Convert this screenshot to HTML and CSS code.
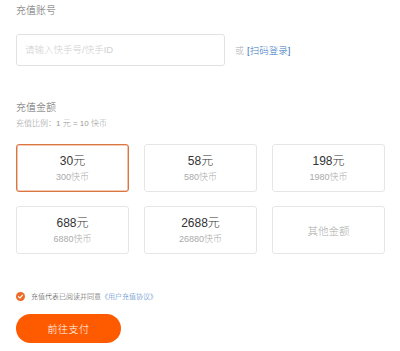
FILE: index.html
```html
<!DOCTYPE html>
<html lang="zh-CN">
<head>
<meta charset="utf-8">
<title>充值</title>
<link rel="stylesheet" href="styles.css">
</head>
<body>
<div class="page">
  <div class="label">充值账号</div>
  <div class="account-row">
    <div class="input">请输入快手号/快手ID</div>
    <span class="or">或</span>
    <a class="scan">[扫码登录]</a>
  </div>
  <div class="label label-amount">充值金额</div>
  <div class="ratio">充值比例：1 元 = 10 快币</div>
  <div class="grid">
    <div class="card selected"><div class="yuan">30元</div><div class="coin">300快币</div></div>
    <div class="card"><div class="yuan">58元</div><div class="coin">580快币</div></div>
    <div class="card"><div class="yuan">198元</div><div class="coin">1980快币</div></div>
    <div class="card"><div class="yuan">688元</div><div class="coin">6880快币</div></div>
    <div class="card"><div class="yuan">2688元</div><div class="coin">26880快币</div></div>
    <div class="card"><div class="other">其他金额</div></div>
  </div>
  <div class="agree">
    <svg class="check" width="9" height="9" viewBox="0 0 9 9"><circle cx="4.5" cy="4.5" r="4.5" fill="#ee6a26"/><path d="M2.4 4.6 L3.9 6 L6.6 3.2" fill="none" stroke="#fff" stroke-width="1.1" stroke-linecap="round" stroke-linejoin="round"/></svg>
    <span class="agree-text">充值代表已阅读并同意</span><a class="agree-link">《用户充值协议》</a>
  </div>
  <div class="btn">前往支付</div>
</div>
</body>
</html>
```
FILE: styles.css
```css
html, body {
  margin: 0;
  padding: 0;
  background: #fff;
}
body {
  font-family: "Liberation Sans", "Noto Sans CJK SC", sans-serif;
  font-weight: 300;
  color: #333;
}
.page {
  padding: 5px 0 0 16px;
}
.label {
  font-size: 10px;
  line-height: 12px;
  color: #666;
}
.account-row {
  margin-top: 17px;
  display: flex;
  align-items: center;
}
.input {
  box-sizing: border-box;
  width: 209px;
  height: 32px;
  border: 1px solid #e2e2e2;
  border-radius: 3px;
  padding-left: 8px;
  font-size: 9.5px;
  line-height: 30px;
  color: #d0d0d0;
}
.or {
  margin-left: 10px;
  font-size: 9px;
  color: #b0b0b0;
}
.scan {
  margin-left: 3px;
  font-size: 9.5px;
  color: #3b78c2;
}
.label-amount {
  margin-top: 36px;
}
.ratio {
  margin-top: 5px;
  font-size: 8px;
  line-height: 10px;
  color: #999;
}
.grid {
  margin-top: 15px;
  display: grid;
  grid-template-columns: repeat(3, 113px);
  grid-auto-rows: 48px;
  column-gap: 15px;
  row-gap: 14px;
}
.card {
  box-sizing: border-box;
  border: 1px solid #e6e6e6;
  border-radius: 3px;
  display: flex;
  flex-direction: column;
  align-items: center;
  justify-content: center;
  gap: 3px;
}
.card.selected {
  border-color: #dd7540;
  box-shadow: inset 0 0 0 0.6px #e59a70;
}
.yuan {
  font-size: 12px;
  line-height: 14px;
  color: #333;
}
.coin {
  font-size: 9px;
  line-height: 12px;
  color: #aaa;
}
.other {
  font-size: 10.5px;
  color: #aaa;
}
.agree {
  margin-top: 37px;
  display: flex;
  align-items: center;
  height: 10px;
  font-size: 7px;
}
.check {
  margin-right: 6px;
  flex: none;
}
.agree-text {
  color: #444;
}
.agree-link {
  color: #3b78c2;
}
.btn {
  margin-top: 13px;
  width: 105px;
  height: 29px;
  border-radius: 15px;
  background: #fe5a00;
  color: #fff;
  font-size: 10px;
  display: flex;
  align-items: center;
  justify-content: center;
  letter-spacing: 0.5px;
}
```
